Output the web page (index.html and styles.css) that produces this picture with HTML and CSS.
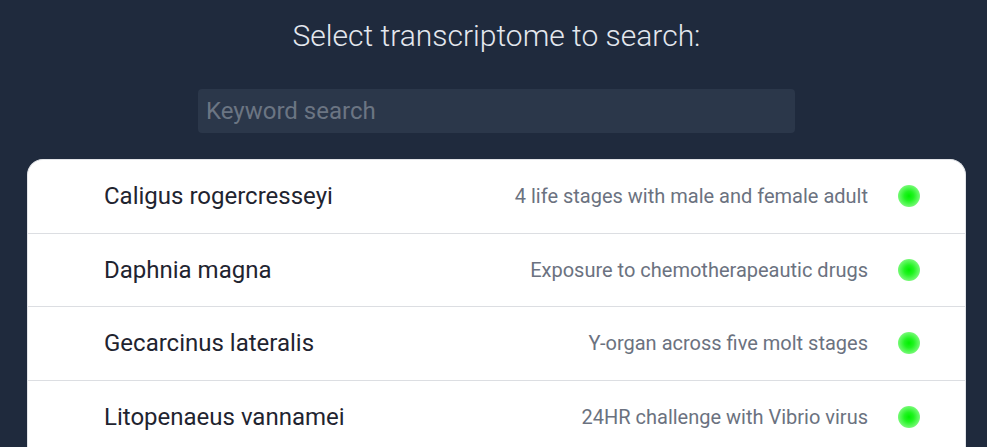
FILE: index.html
```html
<!DOCTYPE html>
<html lang="en">
<head>
<meta charset="utf-8">
<title>Select transcriptome</title>
<link rel="stylesheet" href="styles.css">
</head>
<body>
<main class="page">
  <h1 class="title">Select transcriptome to search:</h1>
  <div class="search-wrap">
    <input class="search" type="text" placeholder="Keyword search">
  </div>
  <ul class="list">
    <li class="row">
      <span class="name">Caligus rogercresseyi</span>
      <span class="desc">4 life stages with male and female adult</span>
      <span class="dot"></span>
    </li>
    <li class="row">
      <span class="name">Daphnia magna</span>
      <span class="desc">Exposure to chemotherapeautic drugs</span>
      <span class="dot"></span>
    </li>
    <li class="row">
      <span class="name">Gecarcinus lateralis</span>
      <span class="desc">Y-organ across five molt stages</span>
      <span class="dot"></span>
    </li>
    <li class="row">
      <span class="name">Litopenaeus vannamei</span>
      <span class="desc">24HR challenge with Vibrio virus</span>
      <span class="dot"></span>
    </li>
  </ul>
</main>
</body>
</html>
```

FILE: styles.css
```css
* { box-sizing: border-box; }
html, body {
  margin: 0;
  padding: 0;
  background: #1f2a3d;
  height: 100%;
  overflow: hidden;
}
body {
  font-family: Roboto, "Liberation Sans", sans-serif;
}
.page {
  display: flex;
  flex-direction: column;
  align-items: center;
  padding-top: 18px;
  padding-left: 6px;
}
.title {
  margin: 0;
  font-weight: 300;
  font-size: 30px;
  line-height: 36px;
  color: #e3e7ee;
  letter-spacing: 0;
}
.search-wrap {
  margin-top: 35px;
  width: 597px;
}
.search {
  display: block;
  width: 100%;
  height: 44px;
  border: none;
  outline: none;
  border-radius: 4px;
  background: #2b374a;
  padding: 0 8px;
  font-family: Roboto, "Liberation Sans", sans-serif;
  font-size: 24px;
  color: #e3e7ee;
}
.search::placeholder {
  color: #6b7583;
}
.list {
  list-style: none;
  margin: 26px 0 0 0;
  padding: 0;
  width: 939px;
  background: #fff;
  border-radius: 16px 16px 0 0;
  border: 1px solid #e2e4e8;
  border-bottom: none;
}
.row {
  display: flex;
  align-items: center;
  height: 73.5px;
  padding: 0 45px 0 76px;
  border-bottom: 1px solid #dcdee2;
}
.name {
  font-size: 24px;
  color: #1f2430;
  flex: 1;
}
.desc {
  font-size: 20px;
  color: #6b7280;
}
.dot {
  width: 22px;
  height: 22px;
  margin-left: 30px;
  border-radius: 50%;
  background: radial-gradient(circle, #00f000 0%, #20f420 30%, #80fa80 75%, rgba(190,252,190,0.6) 100%);
}
```
